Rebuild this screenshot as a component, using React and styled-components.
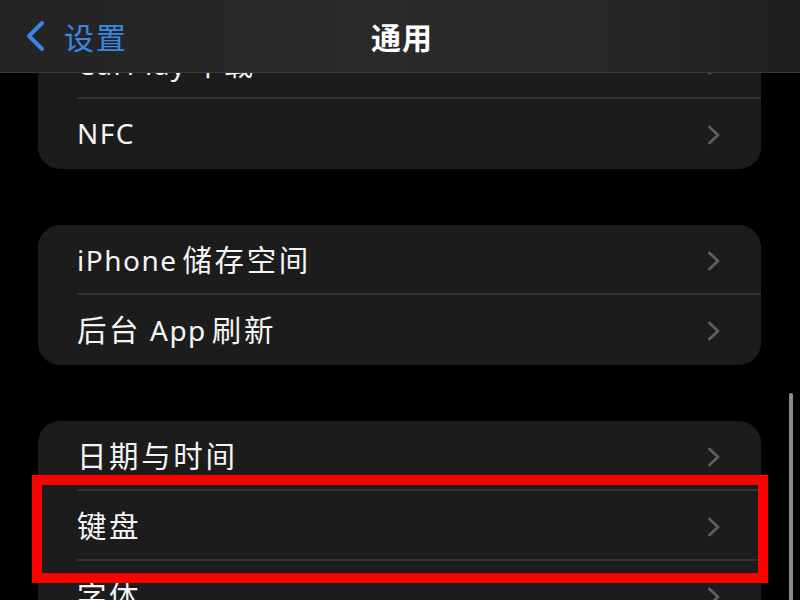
import React from "react";
import styled, { createGlobalStyle } from "styled-components";

const GlobalStyle = createGlobalStyle`
  html, body {
    margin: 0;
    padding: 0;
    background: #000;
    overflow: hidden;
  }
  body {
    font-family: "Noto Sans", "Noto Sans CJK SC", sans-serif;
    color: #f2f2f2;
  }
`;

const Screen = styled.div`
  position: relative;
  width: 800px;
  height: 600px;
  overflow: hidden;
  background: #000;
`;

const NavBar = styled.div`
  position: absolute;
  top: 0;
  left: 0;
  right: 0;
  height: 72px;
  z-index: 5;
  display: flex;
  align-items: center;
  justify-content: center;
  background: linear-gradient(
    to right,
    #232323 0%,
    #2a2a2a 45%,
    #272727 80%,
    #1f1f1f 100%
  );
  border-bottom: 1px solid #3a3a3a;
`;

const BackButton = styled.div`
  position: absolute;
  left: 24px;
  top: 0;
  height: 72px;
  display: flex;
  align-items: center;
  gap: 18px;
  color: #3a87e6;
  font-size: 30px;
  letter-spacing: 2px;
`;

const NavTitle = styled.div`
  font-size: 30px;
  font-weight: 700;
  letter-spacing: 1px;
  color: #fff;
  margin-left: 4px;
`;

const List = styled.div`
  display: flex;
  flex-direction: column;
  gap: 56px;
  padding: 29px 39px 0 38px;
`;

const Card = styled.div`
  background: #1c1c1c;
  border-radius: 22px;
  overflow: hidden;
`;

const Row = styled.div`
  height: 70px;
  box-sizing: border-box;
  display: flex;
  align-items: center;
  padding: 0 40px 3px 39px;
  position: relative;
  &:not(:last-child)::after {
    content: "";
    position: absolute;
    left: 39px;
    right: 0;
    bottom: 0;
    height: 2px;
    background: #343434;
  }
`;

const Label = styled.span`
  flex: 1;
  display: flex;
  align-items: baseline;
  color: #f4f4f4;
  white-space: pre;
`;

const Latin = styled.span`
  font-size: 28px;
  letter-spacing: 1.5px;
  white-space: pre;
`;

const Han = styled.span`
  font-size: 29.5px;
  letter-spacing: 2.6px;
  margin-left: ${(p) => (p.$after ? "5px" : "0")};
`;

const Disclosure = styled.span`
  display: flex;
  margin-top: 4px;
`;

const Highlight = styled.div`
  position: absolute;
  left: 32px;
  top: 475px;
  width: 736px;
  height: 108px;
  box-sizing: border-box;
  border: 10px solid #ff0000;
  z-index: 4;
`;

const ScrollBar = styled.div`
  position: absolute;
  right: 7px;
  top: 393px;
  width: 4px;
  height: 220px;
  border-radius: 2px;
  background: #8c8c8c;
  z-index: 4;
`;

const Chevron = ({ color = "#5e5e5e" }) => (
  <Disclosure>
    <svg width="14" height="20" viewBox="0 0 14 20">
      <path
        d="M2.5 2 L11 10 L2.5 18"
        fill="none"
        stroke={color}
        strokeWidth="2.8"
        strokeLinecap="round"
        strokeLinejoin="round"
      />
    </svg>
  </Disclosure>
);

const BackChevron = () => (
  <svg width="22" height="32" viewBox="0 0 22 32">
    <path
      d="M18 3 L5 16 L18 29"
      fill="none"
      stroke="#3a87e6"
      strokeWidth="4"
      strokeLinecap="round"
      strokeLinejoin="round"
    />
  </svg>
);

// split a label into Han and Latin runs, they are set at different sizes
const runs = (text) => text.match(/[\u4e00-\u9fff]+|[^\u4e00-\u9fff]+/g);

const RowLabel = ({ text }) => {
  const parts = runs(text);
  return (
    <Label>
      {parts.map((part, i) =>
        /[\u4e00-\u9fff]/.test(part) ? (
          <Han key={i} $after={i > 0 && !/\s$/.test(parts[i - 1])}>
            {part}
          </Han>
        ) : (
          <Latin key={i}>{part}</Latin>
        )
      )}
    </Label>
  );
};

const groups = [
  ["CarPlay车载", "NFC"],
  ["iPhone储存空间", "后台 App刷新"],
  ["日期与时间", "键盘", "字体"],
];

export default function App() {
  return (
    <Screen>
      <GlobalStyle />
      <NavBar>
        <BackButton>
          <BackChevron />
          <span>设置</span>
        </BackButton>
        <NavTitle>通用</NavTitle>
      </NavBar>
      <List>
        {groups.map((rows, gi) => (
          <Card key={gi}>
            {rows.map((label) => (
              <Row key={label}>
                <RowLabel text={label} />
                <Chevron />
              </Row>
            ))}
          </Card>
        ))}
      </List>
      <Highlight />
      <ScrollBar />
    </Screen>
  );
}
